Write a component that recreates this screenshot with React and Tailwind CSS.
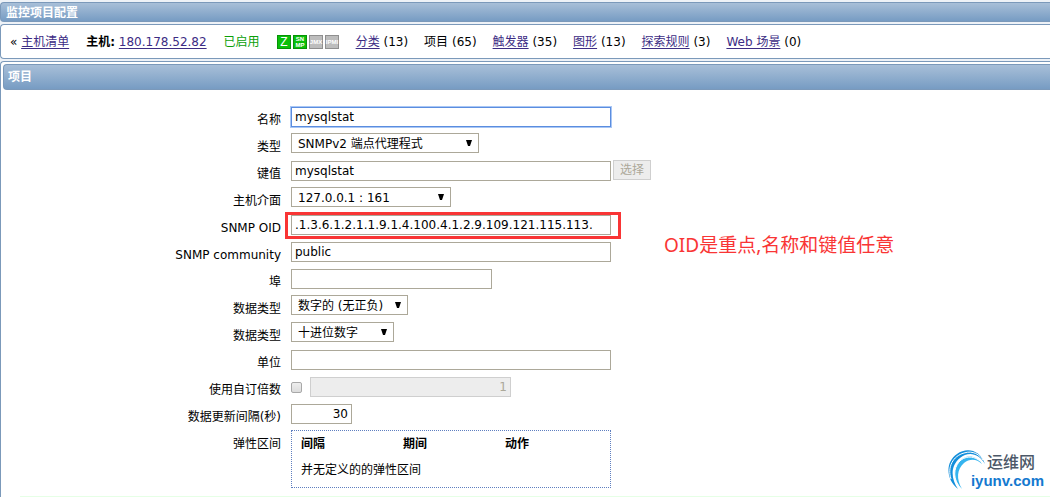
import clsx from 'clsx';

const counters = [
  { label: '分类', count: 13, link: true },
  { label: '项目', count: 65 },
  { label: '触发器', count: 35, link: true },
  { label: '图形', count: 13, link: true },
  { label: '探索规则', count: 3, link: true },
  { label: 'Web 场景', count: 0, link: true },
];

const NavLink = ({ children }) => (
  <a href="#" className="text-[#3c2c84] underline underline-offset-2">
    {children}
  </a>
);

const StatusIcon = ({ active, lines, size }) => (
  <svg width="14" height="14" viewBox="0 0 14 14">
    <rect
      x="0.5"
      y="0.5"
      width="13"
      height="13"
      fill={active ? '#0abf0a' : '#bdbdbd'}
      stroke={active ? '#079307' : '#8f8f8f'}
    />
    {lines.map(({ text, y }) => (
      <text
        key={text}
        x="7"
        y={y}
        fontSize={size}
        fontWeight={size < 12 ? 'bold' : 'normal'}
        textAnchor="middle"
        fill="#fff"
        fontFamily="Liberation Sans, sans-serif"
      >
        {text}
      </text>
    ))}
  </svg>
);

const Row = ({ id, label, select, children }) => (
  <div className="flex h-[27px]">
    <label htmlFor={id} className="w-[278px] shrink-0 pt-1 text-right leading-6">
      {label}
    </label>
    <div className={clsx('ml-[10px] flex items-start', select ? 'pt-[2px]' : 'pt-[3px]')}>
      {children}
    </div>
  </div>
);

const TextInput = ({ className, ...props }) => (
  <input
    type="text"
    className={clsx(
      'h-5 border px-[3px] outline-none disabled:border-[#cfcfcf] disabled:bg-[#ededed] disabled:text-[#aca899]',
      className
    )}
    {...props}
  />
);

const Select = ({ id, className, children }) => (
  <div className={clsx('relative', className)}>
    <select
      id={id}
      className="block h-5 w-full appearance-none border border-[#aca899] bg-white pl-[6px] pr-4 pt-[2px] leading-4 outline-none"
    >
      <option>{children}</option>
    </select>
    <svg
      className="pointer-events-none absolute right-[7px] top-[7px]"
      width="6"
      height="6"
      viewBox="0 0 6 6"
    >
      <path d="M0 0h6L4 6H2z" fill="#000" />
    </svg>
  </div>
);

const SiteLogo = () => (
  <div className="absolute right-[6px] top-[448px] h-11 w-[98px]">
    <svg className="absolute left-0 top-0" width="42" height="44" viewBox="0 0 42 44">
      <path d="M39 16C34 2 21-1 11 6C-1 14 0 32 12 41C5 31 4 18 14 10C22 3 33 5 39 16z" fill="#148fdb" />
      <path d="M36 16C29 6 19 7 13 14C6 22 8 33 16 41C10 31 11 21 18 15C24 10 31 11 36 16z" fill="#35b4ef" />
      <path d="M5 31C1 19 7 8 18 5C27 2 34 7 37 12" fill="none" stroke="#fff" strokeWidth="1" />
      <path d="M12 37C6 27 9 17 15 12C22 7 29 9 34 13" fill="none" stroke="#fff" strokeWidth="1" />
    </svg>
    <div className="absolute left-[41px] top-[5px] text-base font-medium leading-5 text-[#4c5868]">
      运维网
    </div>
    <div className="absolute right-0 top-[23px] font-['Liberation_Sans',sans-serif] text-[15px] font-bold leading-5 text-[#1479cf]">
      iyunv.com
    </div>
  </div>
);

const App = () => {
  return (
    <div className="relative overflow-hidden bg-[#eef2f7] pt-[2px] font-['DejaVu_Sans','Noto_Sans_CJK_SC',sans-serif] text-xs text-black">
      <header className="h-5 rounded-l-sm border border-r-0 border-[#7b99ba] bg-linear-to-b from-[#a8bfd8] to-[#779cc3] pl-[5px]">
        <h1 className="font-bold leading-5 text-white">监控项目配置</h1>
      </header>

      <nav className="mt-[2px] flex h-[35px] items-center gap-[17px] whitespace-nowrap rounded-l-sm border border-r-0 border-[#7b99ba] bg-white pl-[9px]">
        <span>
          « <NavLink>主机清单</NavLink>
        </span>
        <span>
          <b>主机:</b> <NavLink>180.178.52.82</NavLink>
        </span>
        <span className="text-[#0a9f0a]">已启用</span>
        <span className="flex gap-[2px]">
          <StatusIcon active size={12} lines={[{ text: 'Z', y: 11 }]} />
          <StatusIcon active size={6} lines={[{ text: 'SN', y: 6 }, { text: 'MP', y: 12 }]} />
          <StatusIcon size={6} lines={[{ text: 'JMX', y: 9 }]} />
          <StatusIcon size={6} lines={[{ text: 'IPMI', y: 9 }]} />
        </span>
        <div className="flex gap-4">
          {counters.map(({ label, count, link }) => (
            <span key={label}>
              {link ? <NavLink>{label}</NavLink> : label} ({count})
            </span>
          ))}
        </div>
      </nav>

      <main className="mt-[2px] rounded-tl-sm border-l border-t border-[#7b99ba] bg-white pl-[2px] pt-[2px]">
        <div className="h-[26px] rounded-l-sm border border-r-0 border-[#7b99ba] bg-linear-to-b from-[#a8bfd8] to-[#779cc3] pl-[4px]">
          <h2 className="font-bold leading-6 text-white">项目</h2>
        </div>

        <form className="pt-[14px]">
          <Row id="name" label="名称">
            <TextInput
              id="name"
              autoFocus
              defaultValue="mysqlstat"
              className="w-80 border-[#5b8ddf] ring-1 ring-[#a9c7f5]"
            />
          </Row>
          <Row id="type" label="类型" select>
            <Select id="type" className="w-[188px]">SNMPv2 端点代理程式</Select>
          </Row>
          <Row id="key" label="键值">
            <TextInput id="key" defaultValue="mysqlstat" className="w-80 border-[#aca899]" />
            <button
              type="button"
              disabled
              className="-mt-px ml-[2px] h-5 w-[38px] border border-[#cfcfcf] bg-[#ededed] leading-[18px] text-[#aca899]"
            >
              选择
            </button>
          </Row>
          <Row id="interface" label="主机介面" select>
            <Select id="interface" className="w-40">127.0.0.1 : 161</Select>
          </Row>
          <Row id="oid" label="SNMP OID">
            <div className="relative">
              <TextInput
                id="oid"
                defaultValue=".1.3.6.1.2.1.1.9.1.4.100.4.1.2.9.109.121.115.113."
                className="block w-80 border-[#aca899]"
              />
              <div className="pointer-events-none absolute -bottom-1 -left-1.5 -right-2.5 -top-[3px] border-3 border-[#f93535]" />
            </div>
          </Row>
          <Row id="community" label="SNMP community">
            <TextInput id="community" defaultValue="public" className="w-80 border-[#aca899]" />
          </Row>
          <Row id="port" label="埠">
            <TextInput id="port" className="w-[201px] border-[#aca899]" />
          </Row>
          <Row id="valueType" label="数据类型" select>
            <Select id="valueType" className="w-[117px]">数字的 (无正负)</Select>
          </Row>
          <Row id="dataType" label="数据类型" select>
            <Select id="dataType" className="w-[103px]">十进位数字</Select>
          </Row>
          <Row id="units" label="单位">
            <TextInput id="units" className="w-80 border-[#aca899]" />
          </Row>
          <Row id="multiplier" label="使用自订倍数">
            <input
              id="multiplier"
              type="checkbox"
              className="mt-[5px] size-[11px] appearance-none rounded-xs border border-[#a8a8a8] bg-linear-to-b from-[#eeeeee] to-[#dcdcdc]"
            />
            <TextInput
              disabled
              aria-label="倍数"
              defaultValue="1"
              className="ml-2 w-[201px] text-right"
            />
          </Row>
          <Row id="delay" label="数据更新间隔(秒)">
            <TextInput id="delay" defaultValue="30" className="w-[61px] border-[#aca899] text-right" />
          </Row>
          <div className="flex">
            <span className="w-[278px] shrink-0 pt-1 text-right leading-6">弹性区间</span>
            <div className="ml-[10px] mt-[2px] w-80 border border-dotted border-[#5f7fc0] pb-1 pl-[9px]">
              <table className="w-[306px] table-fixed text-left leading-[26px]">
                <thead>
                  <tr>
                    <th>间隔</th>
                    <th>期间</th>
                    <th>动作</th>
                  </tr>
                </thead>
                <tbody>
                  <tr>
                    <td colSpan={3}>并无定义的的弹性区间</td>
                  </tr>
                </tbody>
              </table>
            </div>
          </div>
        </form>
        <div className="ml-[17px] mt-2 h-px bg-[#e6ffe6]" />
      </main>

      <p className="absolute left-[664px] top-[233px] whitespace-nowrap font-['Noto_Sans','Noto_Sans_CJK_SC',sans-serif] text-[19px] leading-6 text-[#f93535]">
        OID是重点,名称和键值任意
      </p>
      <SiteLogo />
    </div>
  );
};

export default App;
